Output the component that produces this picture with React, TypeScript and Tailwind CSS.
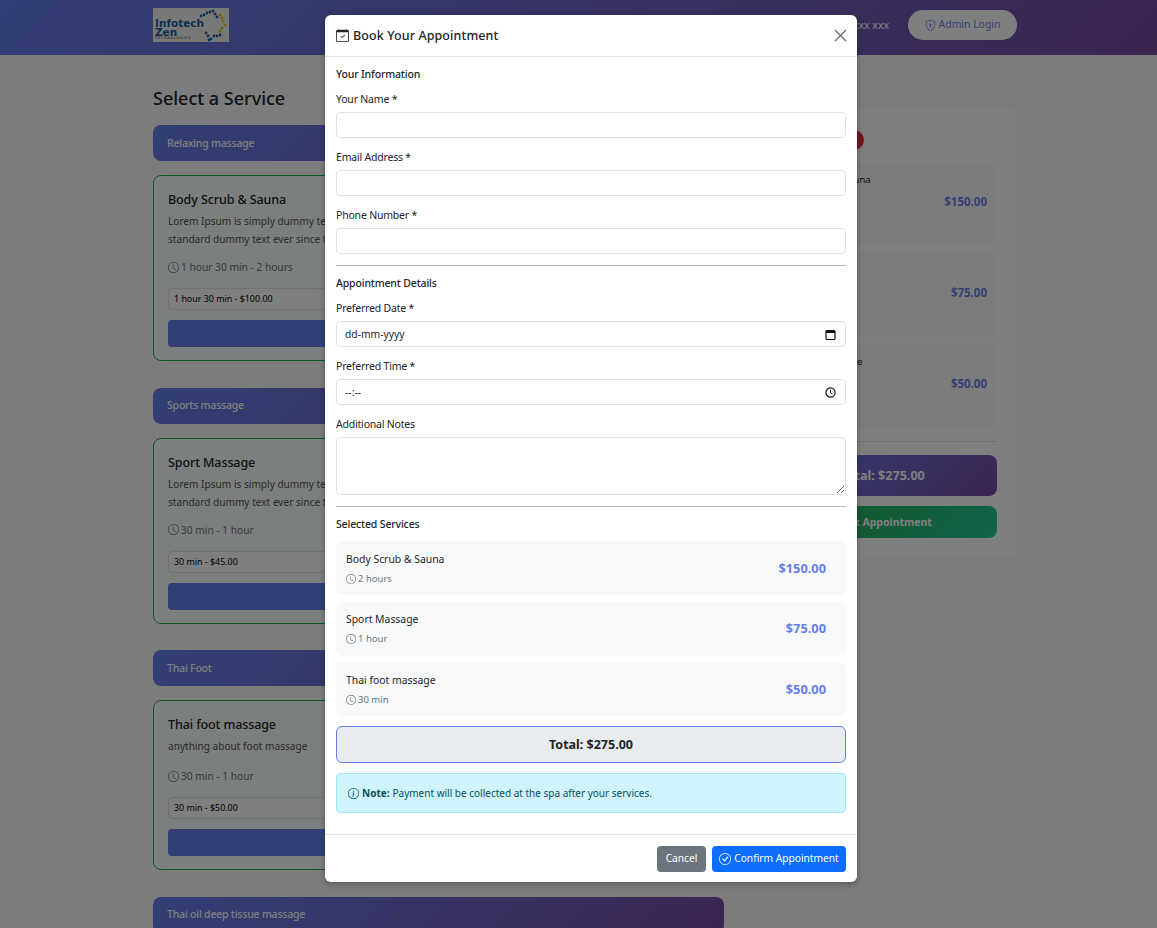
import React from "react";
import { BsCalendarCheck, BsCheckCircle, BsClock, BsInfoCircle, BsShieldLock } from "react-icons/bs";

const lorem = (
    <>
        Lorem Ipsum is simply dummy text of the printing and typesetting industry. Lorem Ipsum has been the
        <br />
        standard dummy text ever since the 1500s, when an unknown printer took a galley of type.
    </>
);

const categories = [
    { name: "Relaxing massage", title: "Body Scrub & Sauna", desc: lorem, time: "1 hour 30 min - 2 hours", option: "1 hour 30 min - $100.00" },
    { name: "Sports massage", title: "Sport Massage", desc: lorem, time: "30 min - 1 hour", option: "30 min - $45.00" },
    { name: "Thai Foot", title: "Thai foot massage", desc: "anything about foot massage", time: "30 min - 1 hour", option: "30 min - $50.00" },
];

const selected = [
    { name: "Body Scrub & Sauna", time: "2 hours", price: "$150.00" },
    { name: "Sport Massage", time: "1 hour", price: "$75.00" },
    { name: "Thai foot massage", time: "30 min", price: "$50.00" },
];

function Logo() {
    const blue = [[201, 16], [204, 15], [207, 13], [210, 12], [213, 11], [215, 14], [217, 17], [206, 33], [208, 36], [211, 39], [214, 36], [217, 36], [220, 35], [209, 40]];
    const yellow = [[220, 15], [222, 18], [223, 21], [225, 25], [222, 28], [220, 31]];
    return (
        <div className="relative h-[34px] w-[76px] bg-[#f1f1ee] pl-[2px] pt-[10px] font-['DejaVu_Sans',sans-serif] font-bold text-[#1b5fa0]">
            <div className="text-[10.5px] leading-[10px]">Infotech</div>
            <div className="text-[10.5px] leading-[8px]">Zen</div>
            <div className="text-[3.5px] leading-[4px] font-normal tracking-[0.7px] text-[#333]">TECHNOLOGIES</div>
            <svg className="absolute left-0 top-0" width="76" height="34" viewBox="153 8 76 34">
                {blue.map(([x, y], i) => <circle key={i} cx={x} cy={y} r="1.4" fill="#1b5fa0" />)}
                {yellow.map(([x, y], i) => <circle key={i} cx={x} cy={y} r="1.5" fill="#e3c52a" />)}
            </svg>
        </div>
    );
}

function Background() {
    return (
        <div>
            <header className="flex h-[55px] items-start bg-[linear-gradient(135deg,#667eea,#764ba2)] pl-[153px] pr-[140px] pt-[8px]">
                <Logo />
                <span className="ml-auto mt-[9px] text-[10.5px] leading-[16px] text-white">+1 xxx xxx xxx</span>
                <button className="ml-[19px] mt-[2px] flex h-[30px] w-[109px] items-center justify-center gap-[3px] rounded-full bg-white text-[10.4px] text-[#667eea]">
                    <BsShieldLock className="h-[11px] w-[11px]" /> Admin Login
                </button>
            </header>

            <main className="ml-[153px] flex w-[864px] items-start gap-[24px]">
                <section className="w-[571px] pt-[31px]">
                    <h2 className="mb-[14px] text-[18px] leading-[25px] font-medium text-[#212529]">Select a Service</h2>
                    {categories.map((c) => (
                        <div key={c.name} className="mb-[26.5px]">
                            <div className="flex h-[36px] items-center rounded-lg bg-[linear-gradient(135deg,#667eea,#764ba2)] px-[14px] pt-[1px] text-[10.5px] font-medium tracking-[-0.2px] text-white">
                                {c.name}
                            </div>
                            <div className="mt-[14px] rounded-lg border border-[#28a745] bg-[#f7fffb] px-[14px] pb-[13px] pt-[14px]">
                                <h3 className="text-[12.5px] leading-[20px] font-medium tracking-[-0.1px] text-[#212529]">{c.title}</h3>
                                <p className="mt-[2px] min-h-[20px] whitespace-nowrap text-[10.1px] leading-[18px] text-[#555]">{c.desc}</p>
                                <div className="mt-[10px] flex items-center gap-[2px] text-[10.2px] leading-[18px] text-[#6c757d]">
                                    <BsClock className="h-[11px] w-[11px]" /> {c.time}
                                </div>
                                <div className="mt-[12px] flex h-[22px] items-center rounded border border-[#dee2e6] bg-white px-[5px] text-[8.9px] text-black">
                                    {c.option}
                                </div>
                                <button className="mt-[10px] block h-[27px] w-full rounded bg-[#667eea] text-[12px] text-white">Add Service</button>
                            </div>
                        </div>
                    ))}
                    <div className="flex h-[36px] items-center rounded-lg bg-[linear-gradient(135deg,#667eea,#764ba2)] px-[14px] pt-[1px] text-[10.5px] font-medium tracking-[-0.2px] text-white">
                        Thai oil deep tissue massage
                    </div>
                </section>

                <aside className="mt-[51px] w-[269px] rounded-lg border border-[#f4f4f4] bg-white p-[19px] pb-[21px] pt-[21px]">
                    <div className="flex h-[24px] items-center justify-between pr-[133px]">
                        <span className="text-[13px] font-medium text-[#212529]">Your Cart</span>
                        <span className="flex h-[20px] w-[20px] items-center justify-center rounded-full bg-[#dc3545] text-[10px] text-white">3</span>
                    </div>
                    <div className="mt-[11px] flex flex-col gap-[9px]">
                        {selected.map((s) => (
                            <div key={s.name} className="h-[82px] rounded-lg bg-[#f8f9fa] px-[10px] pt-[8px] text-[9.8px] text-[#212529]">
                                <div className="leading-[18px]">{s.name}</div>
                                <div className="mt-[4px] text-right text-[11.5px] font-bold text-[#667eea]">{s.price}</div>
                            </div>
                        ))}
                    </div>
                    <div className="mt-[14px] border-t border-[#dee2e6]" />
                    <div className="mt-[13px] flex h-[41px] items-center justify-center rounded-lg bg-[linear-gradient(135deg,#667eea,#764ba2)] pt-[1px] text-[12.6px] font-bold text-white">
                        Total: $275.00
                    </div>
                    <button className="mt-[10px] block h-[32px] w-full rounded-lg bg-[linear-gradient(135deg,#28a745,#20c997)] pt-[1px] text-[10.5px] font-bold text-white">
                        Book Appointment
                    </button>
                </aside>
            </main>
        </div>
    );
}

function Field({ label, className = "" }: { label: string; className?: string }) {
    return <label className={`block text-[10.5px] leading-[16px] tracking-[-0.2px] text-[#212529] ${className}`}>{label}</label>;
}

const inputClass = "mt-[5px] block h-[26px] w-full rounded border border-[#dee2e6] bg-white px-[8px] text-[10.3px] text-[#212529]";
const sectionClass = "text-[10.5px] leading-[16px] font-medium tracking-[-0.15px]";

function BookingModal() {
    return (
        <div className="absolute left-[325px] top-[15px] w-[532px] rounded-md bg-white text-[#212529] shadow-[0_2px_6px_rgba(0,0,0,0.3)]">
            <div className="flex h-[42px] items-center border-b border-[#dee2e6] pl-[11px] pr-[10px]">
                <BsCalendarCheck className="mr-[4px] h-[13px] w-[13px]" />
                <h5 className="mt-[1px] text-[12.5px] font-medium tracking-[0.1px]">Book Your Appointment</h5>
                <svg className="ml-auto" width="13" height="13" viewBox="0 0 13 13" stroke="#6f6f6f" strokeWidth="1.4">
                    <path d="M1 1l11 11M12 1L1 12" />
                </svg>
            </div>

            <div className="px-[11px]">
                <h6 className={`pt-[9px] ${sectionClass}`}>Your Information</h6>
                <Field label="Your Name *" className="mt-[9px]" />
                <input className={inputClass} />
                <Field label="Email Address *" className="mt-[11px]" />
                <input className={inputClass} />
                <Field label="Phone Number *" className="mt-[11px]" />
                <input className={inputClass} />
                <hr className="mt-[11px] border-[#bcbcbc]" />

                <h6 className={`mt-[9px] ${sectionClass}`}>Appointment Details</h6>
                <Field label="Preferred Date *" className="mt-[9px]" />
                <div className={`${inputClass} flex items-center justify-between`}>
                    <span className="mt-[1px]">dd-mm-yyyy</span>
                    <svg className="mr-[1px]" width="11" height="11" viewBox="0 0 11 11" fill="none" stroke="#111" strokeWidth="1.2">
                        <rect x="1" y="1.5" width="9" height="9" rx="1" />
                        <path d="M1 3h9" strokeWidth="2" />
                    </svg>
                </div>
                <Field label="Preferred Time *" className="mt-[11px]" />
                <div className={`${inputClass} flex items-center justify-between`}>
                    <span className="mt-[1px]">--:--</span>
                    <svg className="mr-[1px]" width="11" height="11" viewBox="0 0 11 11" fill="none" stroke="#111" strokeWidth="1.2">
                        <circle cx="5.5" cy="5.5" r="4.6" />
                        <path d="M5.5 2.8v3l2 1.2" strokeWidth="1" />
                    </svg>
                </div>
                <Field label="Additional Notes" className="mt-[11px]" />
                <textarea className="mt-[5px] block h-[58px] w-full rounded border border-[#dee2e6] bg-white" />
                <hr className="mt-[11px] border-[#bcbcbc]" />

                <h6 className={`mt-[9px] ${sectionClass}`}>Selected Services</h6>
                <div className="mt-[9px] flex flex-col gap-[6.5px]">
                    {selected.map((s) => (
                        <div key={s.name} className="flex h-[54px] items-center justify-between rounded-md bg-[#f8f9fa] pl-[10px] pr-[20px]">
                            <div>
                                <div className="text-[10.4px] leading-[16px]">{s.name}</div>
                                <div className="mt-[5px] flex items-center gap-[2px] text-[9.5px] leading-[14px] text-[#6c757d]">
                                    <BsClock className="h-[10px] w-[10px]" /> {s.time}
                                </div>
                            </div>
                            <div className="mt-[1px] text-[12.8px] font-bold text-[#667eea]">{s.price}</div>
                        </div>
                    ))}
                </div>
                <div className="mt-[10px] flex h-[37px] items-center justify-center rounded-md border border-[#667eea] bg-[#e9ecef] pt-[2px] text-[12.5px] font-bold">
                    Total: $275.00
                </div>
                <div className="mt-[10px] flex h-[40px] items-center gap-[3px] rounded border border-[#9eeaf9] bg-[#cff4fc] pl-[11px] text-[10px] text-[#055160]">
                    <BsInfoCircle className="h-[11px] w-[11px]" />
                    <strong className="font-bold">Note:</strong> Payment will be collected at the spa after your services.
                </div>
            </div>

            <div className="mt-[21px] flex h-[48px] items-center justify-end gap-[6px] border-t border-[#dee2e6] pr-[11px]">
                <button className="h-[26px] w-[49px] rounded bg-[#6c757d] pt-[1px] text-[10.2px] text-white">Cancel</button>
                <button className="flex h-[26px] w-[134px] items-center justify-center gap-[3px] rounded bg-[#0d6efd] text-[10.2px] text-white">
                    <BsCheckCircle className="h-[12px] w-[12px]" /> <span className="mt-[1px]">Confirm Appointment</span>
                </button>
            </div>
        </div>
    );
}

export default function App() {
    return (
        <div className="relative h-screen overflow-hidden bg-[#f8f9fa] font-['Noto_Sans',sans-serif]">
            <Background />
            <div className="absolute inset-0 bg-black/50" />
            <BookingModal />
        </div>
    );
}
